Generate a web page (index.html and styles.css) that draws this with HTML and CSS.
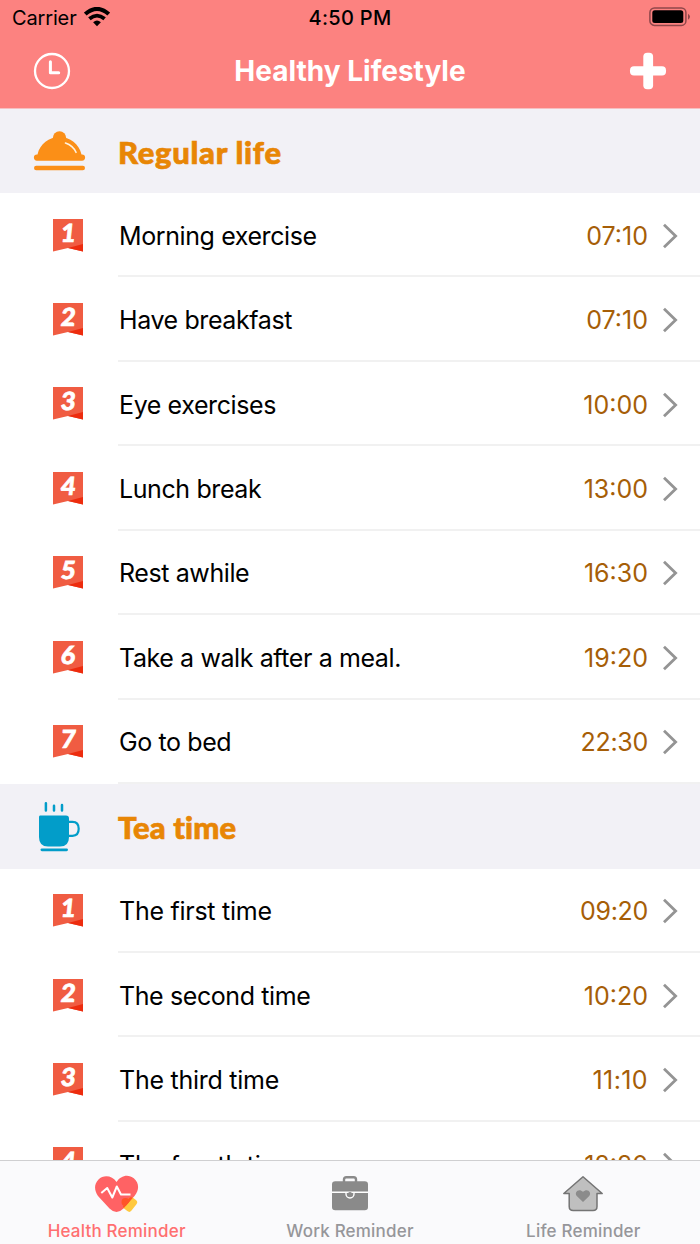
FILE: index.html
```html
<!DOCTYPE html>
<html lang="en">
<head>
<meta charset="utf-8">
<title>Healthy Lifestyle</title>
<link rel="stylesheet" href="styles.css">
</head>
<body>
<svg width="0" height="0" class="defs">
  <symbol id="ribbon" viewBox="0 0 30 33">
    <path d="M0 0H30V32.5L15 29L0 32.5Z" fill="#f05c42"/>
    <path d="M15 29L30 25V32.5Z" fill="#ed2c0e"/>
  </symbol>
  <symbol id="chevron" viewBox="0 0 16 26">
    <path d="M2 1.8L13.6 13L2 24.2" fill="none" stroke="#949494" stroke-width="2.8"/>
  </symbol>
</svg>
<div class="app">
  <header class="top">
    <div class="status">
      <div class="carrier"><span>Carrier</span>
        <svg width="26" height="20" viewBox="0 0 26 20" fill="none" stroke="#000">
          <path d="M1.3 7.1Q13 -3.3 24.7 7.1" stroke-width="4"/>
          <path d="M5.4 11.8Q13 5.4 20.6 11.8" stroke-width="3.8"/>
          <path d="M9.1 15.3Q13 11.9 16.9 15.3L13 19.2Z" fill="#000" stroke="none"/>
        </svg>
      </div>
      <div class="clock">4:50 PM</div>
      <svg class="battery" width="42" height="20" viewBox="0 0 42 20">
        <rect x=".9" y=".9" width="36" height="17.5" rx="4.5" fill="none" stroke="#8f474a" stroke-width="1.5"/>
        <rect x="3.3" y="3.3" width="31" height="12.6" rx="2.5"/>
        <path d="M39 6.7Q43 9.7 39 12.7Z" fill="#8f474a"/>
      </svg>
    </div>
    <div class="nav">
      <svg width="38" height="38" viewBox="0 0 38 38" fill="none" stroke="#fff">
        <circle cx="19" cy="19" r="17" stroke-width="2.3"/>
        <path d="M17.4 9.7V20.7H25.7" stroke-width="3" stroke-linecap="round" stroke-linejoin="round"/>
      </svg>
      <h1>Healthy Lifestyle</h1>
      <svg width="38" height="38" viewBox="0 0 38 38" fill="#fff">
        <rect x="14.3" y=".8" width="9.8" height="36.4" rx="4"/>
        <rect x="1" y="14.3" width="36" height="9.2" rx="4"/>
      </svg>
    </div>
  </header>

  <main class="list">
    <section>
      <div class="section-head">
        <svg width="54" height="44" viewBox="0 0 54 44" fill="#fb8f17">
          <circle cx="26.5" cy="9" r="6.7"/>
          <path d="M4.5 25.5C7 14.5 16 8 26.5 8S46 14.5 48.5 25.5H49A3.1 3.1 0 0 1 49 31.7H4A3.1 3.1 0 0 1 4 25.5Z"/>
          <rect x="1" y="36.8" width="51" height="4.4" rx="2.2"/>
          <path d="M32.5 14Q40 16.5 43 23.3" fill="none" stroke="#fff2df" stroke-width="1.6" stroke-linecap="round"/>
        </svg>
        <h2>Regular life</h2>
      </div>
      <div class="row"><svg class="flag" width="30" height="33"><use href="#ribbon"/><text x="17" y="22.8">1</text></svg><div class="cell"><span class="name">Morning exercise</span><span class="time">07:10</span><svg width="16" height="26"><use href="#chevron"/></svg></div></div>
      <div class="row"><svg class="flag" width="30" height="33"><use href="#ribbon"/><text x="17" y="22.8">2</text></svg><div class="cell"><span class="name">Have breakfast</span><span class="time">07:10</span><svg width="16" height="26"><use href="#chevron"/></svg></div></div>
      <div class="row"><svg class="flag" width="30" height="33"><use href="#ribbon"/><text x="17" y="22.8">3</text></svg><div class="cell"><span class="name">Eye exercises</span><span class="time">10:00</span><svg width="16" height="26"><use href="#chevron"/></svg></div></div>
      <div class="row"><svg class="flag" width="30" height="33"><use href="#ribbon"/><text x="17" y="22.8">4</text></svg><div class="cell"><span class="name">Lunch break</span><span class="time">13:00</span><svg width="16" height="26"><use href="#chevron"/></svg></div></div>
      <div class="row"><svg class="flag" width="30" height="33"><use href="#ribbon"/><text x="17" y="22.8">5</text></svg><div class="cell"><span class="name">Rest awhile</span><span class="time">16:30</span><svg width="16" height="26"><use href="#chevron"/></svg></div></div>
      <div class="row"><svg class="flag" width="30" height="33"><use href="#ribbon"/><text x="17" y="22.8">6</text></svg><div class="cell"><span class="name">Take a walk after a meal.</span><span class="time">19:20</span><svg width="16" height="26"><use href="#chevron"/></svg></div></div>
      <div class="row"><svg class="flag" width="30" height="33"><use href="#ribbon"/><text x="17" y="22.8">7</text></svg><div class="cell"><span class="name">Go to bed</span><span class="time wide">22:30</span><svg width="16" height="26"><use href="#chevron"/></svg></div></div>
    </section>
    <section>
      <div class="section-head tea">
        <svg width="54" height="52" viewBox="0 0 54 52" fill="#029dc9">
          <path d="M7 14.5H33Q36 14.5 36 17.5V36Q36 45.5 27 45.5H15Q6 45.5 6 36V16Q6 14.5 7 14.5Z"/>
          <path d="M35 20.8H39.5Q45.7 20.8 45.7 27.8T39.5 34.8H35" fill="none" stroke="#029dc9" stroke-width="2.2"/>
          <rect x="7.5" y="47.4" width="27.5" height="2.8" rx="1.4"/>
          <path d="M12.9 2.3V9.5M21 4.7V9.5M29 4V9.5" stroke="#029dc9" stroke-width="2.5" stroke-linecap="round"/>
        </svg>
        <h2>Tea time</h2>
      </div>
      <div class="row"><svg class="flag" width="30" height="33"><use href="#ribbon"/><text x="17" y="22.8">1</text></svg><div class="cell"><span class="name loose">The first time</span><span class="time wide">09:20</span><svg width="16" height="26"><use href="#chevron"/></svg></div></div>
      <div class="row"><svg class="flag" width="30" height="33"><use href="#ribbon"/><text x="17" y="22.8">2</text></svg><div class="cell"><span class="name">The second time</span><span class="time">10:20</span><svg width="16" height="26"><use href="#chevron"/></svg></div></div>
      <div class="row"><svg class="flag" width="30" height="33"><use href="#ribbon"/><text x="17" y="22.8">3</text></svg><div class="cell"><span class="name loose">The third time</span><span class="time eleven">11:10</span><svg width="16" height="26"><use href="#chevron"/></svg></div></div>
      <div class="row"><svg class="flag" width="30" height="33"><use href="#ribbon"/><text x="17" y="22.8">4</text></svg><div class="cell"><span class="name loose">The fourth time</span><span class="time">12:20</span><svg width="16" height="26"><use href="#chevron"/></svg></div></div>
    </section>
  </main>

  <nav class="tabs">
    <div class="tab active">
      <svg width="46" height="40" viewBox="0 0 46 40">
        <defs><clipPath id="heart"><path d="M22.5 8C18.5 1.5 9.5.3 4.5 5.5S.5 17 4 22L15.5 34.5Q22.5 41.5 29.5 34.5L40.5 22C45.5 16 45.3 9 39.8 4.3S26.5 1.5 22.5 8Z"/></clipPath></defs>
        <path d="M22.5 8C18.5 1.5 9.5.3 4.5 5.5S.5 17 4 22L15.5 34.5Q22.5 41.5 29.5 34.5L40.5 22C45.5 16 45.3 9 39.8 4.3S26.5 1.5 22.5 8Z" fill="#ff6264"/>
        <rect x="31.2" y="23.5" width="9.8" height="14" rx="3" transform="rotate(38 36.2 30.5)" fill="#ffc93f"/>
        <g clip-path="url(#heart)" fill="#ff5428">
          <rect x="31.2" y="23.5" width="9.8" height="14" rx="3" transform="rotate(38 36.2 30.5)"/>
          <circle cx="31.5" cy="28" r="4"/>
        </g>
        <path d="M7.3 19L13.2 14L18.3 23.5L22.8 12.5L27 20.5H36.5" fill="none" stroke="#fff" stroke-width="2" stroke-linejoin="round"/>
      </svg>
      <span>Health Reminder</span>
    </div>
    <div class="tab">
      <svg width="46" height="40" viewBox="0 0 46 40" fill="#8a8a8a">
        <path d="M17 8V5.5Q17 3.2 19.3 3.2H26.7Q29 3.2 29 5.5V8" fill="none" stroke="#8a8a8a" stroke-width="2.4"/>
        <rect x="5" y="7.3" width="36" height="29" rx="3.3"/>
        <path d="M5 18.3H41M19 18.5V20A4 4 0 0 0 27 20V18.5" fill="none" stroke="#fff" stroke-width="1.4"/>
        <circle cx="23" cy="20" r="2"/>
      </svg>
      <span>Work Reminder</span>
    </div>
    <div class="tab">
      <svg width="46" height="40" viewBox="0 0 46 40">
        <path d="M23 2.7L42.2 19.5H37V32.5Q37 36.5 33 36.5H13.2Q9.2 36.5 9.2 32.5V19.5H3.8Z" fill="#bfbfbf" stroke="#747474" stroke-width="1.5" stroke-linejoin="round"/>
        <path d="M23 28L17 22.2C13.5 18.5 18.8 13.5 23 17.8C27.2 13.5 32.5 18.5 29 22.2Z" fill="#8b8b8b"/>
      </svg>
      <span>Life Reminder</span>
    </div>
  </nav>
</div>
</body>
</html>
```
FILE: styles.css
```css
* { box-sizing: border-box; }
body { margin: 0; background: #fff; font-family: Inter, Roboto, sans-serif; color: #000; }
svg { display: block; flex: none; }
.defs { position: absolute; }
.app { width: 700px; height: 1244px; display: flex; flex-direction: column; overflow: hidden; }

.top { height: 108.5px; flex: none; background: #fc8280; border-bottom: 1px solid #f6bfc1; }
.status { height: 36px; display: grid; grid-template-columns: 1fr auto 1fr; align-items: center; padding: 0 9px 0 12px; font-size: 20px; line-height: 36px; }
.carrier { display: flex; align-items: center; gap: 8px; }
.carrier span { letter-spacing: -.15px; }
.carrier svg { margin: -3px 0 0 -1px; }
.clock { font-weight: 500; letter-spacing: .3px; margin-right: 3px; }
.battery { justify-self: end; margin-top: -2px; }
.nav { height: 70px; display: flex; align-items: center; justify-content: space-between; padding: 0 33px; }
h1 { margin: 0; font-size: 28px; font-weight: 700; color: #fff; line-height: 36px; }

.list { flex: 1; min-height: 0; overflow: hidden; }
.section-head { height: 84.5px; background: #f2f1f6; display: flex; align-items: center; padding: 1px 0 0 33px; }
.section-head h2 { margin: 1px 0 0 31px; font-family: "Marker Felt", Lato, sans-serif; font-size: 31px; font-weight: 900; line-height: 40px; letter-spacing: .7px; font-variant-ligatures: none; -webkit-text-stroke: .7px #e88605; color: #e88605; }
.tea h2 { letter-spacing: .1px; }
.row { height: 84.45px; display: flex; padding-left: 53px; }
.flag { margin: 25.6px 35px 0 0; overflow: visible; }
.flag text { font: 900 25px/1 Lato, sans-serif; fill: #fff; stroke: #fff; stroke-width: .7px; text-anchor: middle; transform: skewX(-6deg); }
.cell { flex: 1; display: flex; align-items: center; padding-right: 22px; border-bottom: 2px solid #f1f1f1; font-size: 25px; line-height: 30px; }
.name { flex: 1; margin: 3px 0 0 1px; letter-spacing: -.4px; }
.name.loose { letter-spacing: -.26px; }
.time { margin: 3px 14px 0 0; color: #a65e07; }
.time.wide { letter-spacing: -.3px; }
.time.eleven { letter-spacing: .4px; }
.cell svg { margin-top: 3px; }

.tabs { height: 84px; flex: none; display: grid; grid-template-columns: repeat(3, 1fr); background: #fafafc; border-top: 1px solid #cfcfd1; }
.tab { display: flex; flex-direction: column; align-items: center; padding-top: 13px; color: #96969a; font-size: 17px; font-weight: 500; line-height: 22px; }
.tab span { margin-top: 6px; letter-spacing: .2px; }
.tab.active { color: #ff6f70; }
```
